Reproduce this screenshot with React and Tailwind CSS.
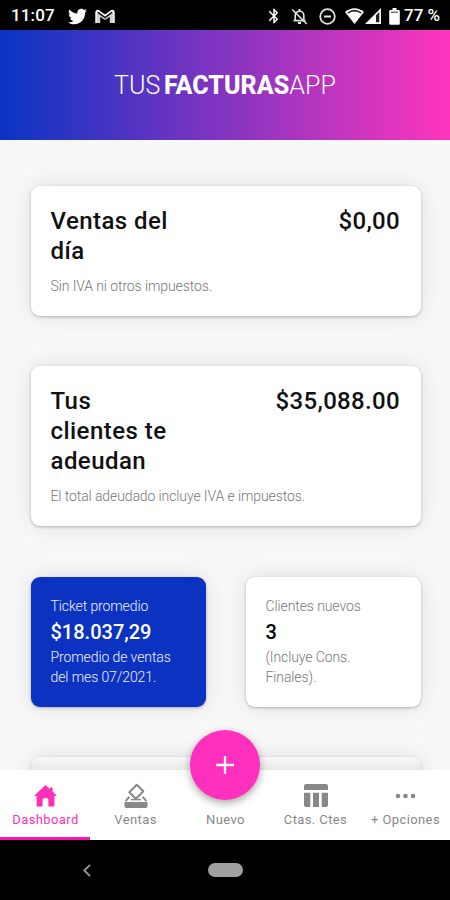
import React from "react";
import clsx from "clsx";
import { FaTwitter } from "react-icons/fa";
import { MdBluetooth } from "react-icons/md";

const HomeIcon = () => (
  <svg className="w-[23px] h-[22px]" viewBox="0 0 23 22" fill="currentColor">
    <path d="M11.5 0 16 4.2V2.6h2.600v4L23 11h-2.600v10.600h-6v-6.600q0-2-2.900-2t-2.900 2v6.600H2.600V11H0z" />
  </svg>
);

const VoteIcon = () => (
  <svg
    className="w-[24px] h-[26px]"
    viewBox="0 0 24 26"
    fill="none"
    stroke="currentColor"
    strokeWidth="2"
  >
    <path d="M12.800 1.700 19.300 8.200 11.800 15.700 5.300 9.200z" strokeLinejoin="round" />
    <path d="M5.300 13.800 1.600 18.200M18.700 13.800 22.400 18.200" />
    <path d="M7 16.600h10" strokeWidth="1.500" />
    <path
      d="M.5 19h23v4.200a1.800 1.800 0 0 1-1.800 1.800H2.300A1.800 1.800 0 0 1 .5 23.200z"
      fill="currentColor"
      stroke="none"
    />
  </svg>
);

const TableIcon = () => (
  <svg className="w-[24px] h-[23px]" viewBox="0 0 24 23" fill="currentColor">
    <path d="M2 0h20a2 2 0 0 1 2 2v4H0V2a2 2 0 0 1 2-2z" />
    <path d="M0 8.700h6.300V23H2a2 2 0 0 1-2-2zM9 8.700h6V23H9zM17.700 8.700H24V21a2 2 0 0 1-2 2h-4.300z" />
  </svg>
);

const MoreIcon = () => (
  <svg className="w-[21px] h-[6px]" viewBox="0 0 21 6" fill="currentColor">
    <circle cx="3" cy="3" r="2.300" />
    <circle cx="10.500" cy="3" r="2.300" />
    <circle cx="18" cy="3" r="2.300" />
  </svg>
);

const GmailIcon = () => (
  <svg className="w-[20px] h-[15px]" viewBox="0 0 20 15">
    <path
      d="M3 14V3.500L10 8.500l7-5V14"
      fill="none"
      stroke="#d0d0d0"
      strokeWidth="4.500"
      strokeLinejoin="round"
    />
    <path
      d="M3 3.300 10 8.600l7-5.300"
      fill="none"
      stroke="#111"
      strokeWidth="1.500"
    />
    <path
      d="M1 14V3.500Q1 1 3.500 1.600L10 6.500l6.500-4.900Q19 1 19 3.500V14"
      fill="none"
      stroke="#fff"
      strokeWidth="1.300"
    />
  </svg>
);

const BellOffIcon = () => (
  <svg
    className="w-[17px] h-[17px]"
    viewBox="0 0 17 17"
    fill="none"
    stroke="#ddd"
    strokeWidth="1.700"
  >
    <path d="M4.200 12.500V7.500a4.300 4.300 0 0 1 8.600 0v5M2.500 12.700h12" />
    <path d="M8.500 1v2M7 15h3" strokeWidth="2" />
    <path d="M1.200 1.500 15.800 16" />
  </svg>
);

const DndIcon = () => (
  <svg
    className="w-[17px] h-[17px]"
    viewBox="0 0 17 17"
    fill="none"
    stroke="#e5e5e5"
    strokeWidth="1.700"
  >
    <circle cx="8.500" cy="8.500" r="7.300" />
    <path d="M5 8.500h7" strokeWidth="2" />
  </svg>
);

const WifiIcon = () => (
  <svg className="w-[19px] h-[16px]" viewBox="0 0 19 16">
    <path d="M9.500 16 0 4Q9.500-3.500 19 4z" fill="#fff" />
    <path d="M2.200 4.400Q9.500-.8 16.800 4.400L15.800 5.600Q9.500 1.200 3.200 5.600z" fill="#222" />
  </svg>
);

const SignalIcon = () => (
  <svg className="w-[16px] h-[16px]" viewBox="0 0 16 16">
    <path d="M16 0v16H0z" fill="#fff" />
    <path d="M14.300 4v10.300h-3.300V7.300z" fill="#222" />
  </svg>
);

const BatteryIcon = () => (
  <svg className="w-[11px] h-[17px]" viewBox="0 0 11 17" fill="#fff">
    <path d="M3.500 0h4v2h2q1.300 0 1.300 1.300v12.200q0 1.300-1.300 1.300h-8Q.2 16.800.2 15.500V3.300Q.2 2 1.500 2h2z" />
    <path d="M2 3.600h7v1.200H2z" fill="#555" />
  </svg>
);

const StatusBar = () => (
  <div className="flex h-[30px] shrink-0 items-center bg-black pt-[2px] pl-[11px] pr-[9px] text-white">
    <span className="text-[17px] font-medium w-[57px] tracking-[0.15px]">
      11:07
    </span>
    <FaTwitter className="w-[19px] h-[19px]" />
    <span className="ml-[8px]">
      <GmailIcon />
    </span>
    <MdBluetooth className="ml-auto w-[18px] h-[18px]" />
    <span className="ml-[8px]">
      <BellOffIcon />
    </span>
    <span className="ml-[11px]">
      <DndIcon />
    </span>
    <span className="ml-[9px]">
      <WifiIcon />
    </span>
    <span className="ml-[1px]">
      <SignalIcon />
    </span>
    <span className="ml-[8px]">
      <BatteryIcon />
    </span>
    <span className="ml-[4px] w-[37px] whitespace-nowrap text-[17px] font-medium">
      77 %
    </span>
  </div>
);

const Card = ({ className, children }) => (
  <div
    className={clsx(
      "rounded-[9px] px-[20px] shadow-[0_1px_3px_rgba(0,0,0,0.25),0_0_22px_rgba(0,0,0,0.11)]",
      className
    )}
  >
    {children}
  </div>
);

const BigCard = ({ title, amount, note, className }) => (
  <Card className={clsx("bg-white pt-[20px]", className)}>
    <div className="flex justify-between text-[24px] leading-[30px] font-medium text-[#111]">
      <h2 className="w-[130px] tracking-[0.45px]">{title}</h2>
      <span className="mr-[0.4px] tracking-[0.35px]">{amount}</span>
    </div>
    <p className="mt-[10px] text-[14px] leading-[20px] font-light tracking-[-0.1px] text-[#777]">
      {note}
    </p>
  </Card>
);

const SmallCard = ({ label, value, note, className, valueClass }) => (
  <Card
    className={clsx(
      "h-[130px] w-[175px] pt-[19px] font-light tracking-[-0.1px]",
      className
    )}
  >
    <p className="text-[14px] leading-[21px]">{label}</p>
    <p
      className={clsx(
        "text-[20px] leading-[30px] font-medium tracking-normal",
        valueClass
      )}
    >
      {value}
    </p>
    <p className="text-[14px] leading-[20.5px]">{note}</p>
  </Card>
);

const tabs = [
  { name: "Dashboard", icon: <HomeIcon />, active: true },
  { name: "Ventas", icon: <VoteIcon /> },
  { name: "Nuevo" },
  { name: "Ctas. Ctes", icon: <TableIcon /> },
  { name: "+ Opciones", icon: <MoreIcon /> },
];

const TabBar = () => (
  <nav className="relative grid h-[70px] shrink-0 grid-cols-5 bg-white">
    {tabs.map((tab) => (
      <div
        key={tab.name}
        className={clsx(
          "flex flex-col items-center border-b-[3px] pt-[12px] pl-px",
          tab.active
            ? "border-[#f815b0] text-[#fb2fba]"
            : "border-transparent text-[#888]"
        )}
      >
        <div className="flex h-[27px] items-center">{tab.icon}</div>
        <span className="mt-[2px] whitespace-nowrap text-[13px] leading-[18px] tracking-[0.4px]">
          {tab.name}
        </span>
      </div>
    ))}
    <button className="absolute left-[190px] top-[-40px] flex size-[70px] items-center justify-center rounded-full bg-[#ff30be] shadow-[0_3px_8px_rgba(0,0,0,0.35)]">
      <svg className="size-[18px]" viewBox="0 0 18 18" stroke="#fff" strokeWidth="2.300">
        <path d="M9 0v18M0 9h18" />
      </svg>
    </button>
  </nav>
);

const SystemBar = () => (
  <div className="grid h-[60px] shrink-0 grid-cols-5 items-center bg-black">
    <div />
    <svg
      className="ml-[-7px] h-[13px] w-[8px]"
      viewBox="0 0 8 13"
      fill="none"
      stroke="#999"
      strokeWidth="1.800"
    >
      <path d="M7 .8 1.300 6.500 7 12.200" />
    </svg>
    <div className="mx-auto h-[14px] w-[35px] rounded-full bg-[#a0a0a0]" />
  </div>
);

const App = () => {
  return (
    <div className="flex h-[900px] w-[450px] flex-col overflow-hidden bg-[#f8f8f8] font-['Roboto',sans-serif]">
      <StatusBar />
      <header className="flex h-[110px] shrink-0 items-center justify-center bg-linear-to-r/srgb from-[#0934c4] to-[#ff35bd] text-[25px] text-white">
        <h1 className="flex whitespace-nowrap pt-[2px] font-light">
          <span className="mr-[3.5px] tracking-[0.1px]">TUS</span>
          <span className="font-extrabold tracking-[0.05px]">FACTURAS</span>
          <span className="tracking-[0.1px]">APP</span>
        </h1>
      </header>

      <main className="flex min-h-0 flex-1 flex-col overflow-hidden pr-[29.5px] pl-[30.5px] pt-[45.5px]">
        <BigCard
          className="h-[130px] shrink-0"
          title="Ventas del día"
          amount="$0,00"
          note="Sin IVA ni otros impuestos."
        />
        <BigCard
          className="mt-[50px] h-[160px] shrink-0"
          title="Tus clientes te adeudan"
          amount="$35,088.00"
          note="El total adeudado incluye IVA e impuestos."
        />
        <div className="mt-[51px] flex shrink-0 justify-between">
          <SmallCard
            className="bg-[#0b32c0] text-[#f0f2ff]"
            valueClass="text-white"
            label="Ticket promedio"
            value="$18.037,29"
            note="Promedio de ventas del mes 07/2021."
          />
          <SmallCard
            className="bg-white text-[#777]"
            valueClass="text-black"
            label="Clientes nuevos"
            value="3"
            note="(Incluye Cons. Finales)."
          />
        </div>
        <Card className="mt-[50px] h-[130px] shrink-0 bg-linear-to-b from-[#f8f8f8] from-0% to-[#e8e8e8] to-10%" />
      </main>

      <TabBar />
      <SystemBar />
    </div>
  );
};

export default App;
